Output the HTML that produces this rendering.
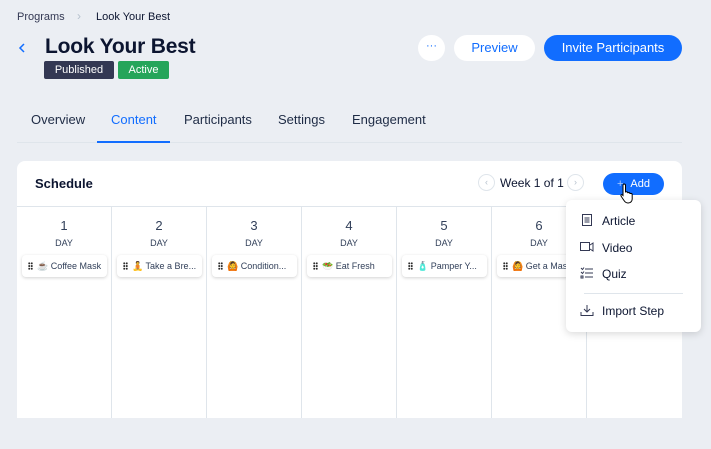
<!DOCTYPE html>
<html><head><meta charset="utf-8"><style>
*{box-sizing:border-box;margin:0;padding:0}
body{width:711px;height:449px;background:#ebeef3;font-family:"Liberation Sans",sans-serif;color:#20303c;position:relative;overflow:hidden}
.abs{position:absolute}
.crumb{top:11px;font-size:11px;color:#333853}
h1{position:absolute;left:45px;top:35px;font-size:21px;font-weight:bold;color:#0c1530;letter-spacing:-0.2px}
.tag{position:absolute;top:61px;height:18px;font-size:11px;color:#fff;line-height:18px;text-align:center;border-radius:2px}
.btn{position:absolute;top:35px;height:26px;border-radius:13px;font-size:13px;line-height:26px;text-align:center}
.tab{position:absolute;top:112px;font-size:13px;color:#1e2b45}
.card{position:absolute;left:17px;top:161px;width:665px;height:257px;background:#fff;border-radius:8px 8px 0 0;overflow:hidden}
.col{position:absolute;top:45px;width:95px;height:212px;border-right:1px solid #dfe5eb;text-align:center}
.num{margin-top:12px;font-size:13px;color:#32405a}
.day{font-size:9px;color:#32405a;margin-top:5px}
.step{position:absolute;left:5px;top:49px;width:85px;height:22px;border-radius:4px;background:#fff;box-shadow:0 1px 3px rgba(0,0,0,.18);font-size:9px;color:#32405a;text-align:left;line-height:22px;padding-left:6px;white-space:nowrap;overflow:hidden}
.dots{display:inline-block;width:5px;height:8px;margin-right:4px;vertical-align:-1px;background:radial-gradient(circle,#2b2b2b 0.9px,transparent 1.1px) 0 0/2.5px 2.7px}
.menu{position:absolute;left:566px;top:200px;width:135px;height:132px;background:#fff;border-radius:6px;box-shadow:0 2px 8px rgba(0,0,0,.15)}
.mi{position:absolute;left:36px;font-size:12px;color:#0c1530}
</style></head><body>
<div class="abs crumb" style="left:17px">Programs</div>
<div class="abs" style="left:77px;top:9px;font-size:12px;color:#b6c1cd">›</div>
<div class="abs crumb" style="left:96px;color:#0c1530">Look Your Best</div>
<svg class="abs" style="left:17px;top:42px" width="10" height="12"><path d="M7 2L3 6l4 4" stroke="#116dff" stroke-width="1.5" fill="none"/></svg>
<h1>Look Your Best</h1>
<div class="tag" style="left:44px;width:70px;background:#333853">Published</div>
<div class="tag" style="left:118px;width:51px;background:#25a55a">Active</div>
<div class="btn" style="left:418px;width:27px;background:#fff;color:#116dff;font-size:11px;line-height:22px">···</div>
<div class="btn" style="left:454px;width:81px;background:#fff;color:#116dff">Preview</div>
<div class="btn" style="left:544px;width:138px;background:#116dff;color:#fff">Invite Participants</div>
<div class="tab" style="left:31px">Overview</div>
<div class="tab" style="left:111px;color:#116dff">Content</div>
<div class="tab" style="left:184px">Participants</div>
<div class="tab" style="left:278px">Settings</div>
<div class="tab" style="left:352px">Engagement</div>
<div class="abs" style="left:17px;top:142px;width:665px;height:1px;background:#dfe5eb"></div>
<div class="abs" style="left:97px;top:141px;width:73px;height:2px;background:#116dff"></div>
<div class="card">
<div class="abs" style="left:18px;top:15px;font-size:13px;font-weight:bold;color:#0c1530">Schedule</div>
<div class="abs" style="left:461px;top:13px;width:17px;height:17px;border:1px solid #dfe5eb;border-radius:50%;font-size:9px;color:#b6c1cd;text-align:center;line-height:15px">‹</div>
<div class="abs" style="left:483px;top:15px;font-size:12px;color:#0c1530">Week 1 of 1</div>
<div class="abs" style="left:550px;top:13px;width:17px;height:17px;border:1px solid #dfe5eb;border-radius:50%;font-size:9px;color:#b6c1cd;text-align:center;line-height:15px">›</div>
<div class="abs" style="left:586px;top:12px;width:61px;height:22px;border-radius:11px;background:#116dff;color:#fff;font-size:11px;line-height:22px;display:flex;justify-content:center;gap:7px"><span style="color:#a9c8ff">+</span><span>Add</span></div>
<div class="abs" style="left:0;top:45px;width:665px;height:1px;background:#dfe5eb"></div>
<div class="col" style="left:0"><div class="num">1</div><div class="day">DAY</div><div class="step"><span class="dots"></span>☕ Coffee Mask</div></div>
<div class="col" style="left:95px"><div class="num">2</div><div class="day">DAY</div><div class="step"><span class="dots"></span>🧘 Take a Bre...</div></div>
<div class="col" style="left:190px"><div class="num">3</div><div class="day">DAY</div><div class="step"><span class="dots"></span>🙆 Condition...</div></div>
<div class="col" style="left:285px"><div class="num">4</div><div class="day">DAY</div><div class="step"><span class="dots"></span>🥗 Eat Fresh</div></div>
<div class="col" style="left:380px"><div class="num">5</div><div class="day">DAY</div><div class="step"><span class="dots"></span>🧴 Pamper Y...</div></div>
<div class="col" style="left:475px"><div class="num">6</div><div class="day">DAY</div><div class="step"><span class="dots"></span>🙆 Get a Massage</div></div>
<div class="col" style="left:570px;border:none"><div class="num">7</div><div class="day">DAY</div></div>
</div>
<div class="menu">
<svg class="abs" style="left:15px;top:14px" width="12" height="13"><rect x="1.5" y="0.5" width="9" height="11" fill="none" stroke="#333853"/><path d="M3.5 4h5M3.5 6h5M3.5 8h5" stroke="#333853"/></svg>
<div class="mi" style="top:14px">Article</div>
<svg class="abs" style="left:14px;top:41px" width="14" height="12"><rect x="0.5" y="1.5" width="9" height="8" fill="none" stroke="#333853"/><path d="M10 4l3-2v8l-3-2" fill="none" stroke="#333853"/></svg>
<div class="mi" style="top:41px">Video</div>
<svg class="abs" style="left:14px;top:67px" width="14" height="13"><path d="M5 2h8M5 6h8M5 10h8M1 1l1.5 1.5L4 0.5M1 5l1.5 1.5L4 4.5" stroke="#333853" fill="none"/><rect x="1" y="9" width="2" height="2" fill="none" stroke="#333853"/></svg>
<div class="mi" style="top:67px">Quiz</div>
<div class="abs" style="left:18px;top:93px;width:99px;height:1px;background:#dfe5eb"></div>
<svg class="abs" style="left:14px;top:104px" width="14" height="13"><path d="M7 1v7M4 5l3 3 3-3M1 8v3.5h12V8" stroke="#333853" fill="none"/></svg>
<div class="mi" style="top:104px">Import Step</div>
</div>
<svg class="abs" style="left:619px;top:182px" width="18" height="24"><path d="M5 2c1 0 1.5.5 1.5 1.5V10l1-.3c.8 0 1.2.5 1.2 1l1-.2c.8 0 1.2.5 1.2 1l1-.1c.8 0 1.3.6 1.3 1.3V17c0 2-1.5 4-4 4H9c-2 0-3-1-4-2.5L2 14c-.5-.7.3-1.7 1.2-1.2L4 13.5V3.5C4 2.5 4.3 2 5 2z" fill="#fff" stroke="#000" stroke-width="1"/></svg>
</body></html>
